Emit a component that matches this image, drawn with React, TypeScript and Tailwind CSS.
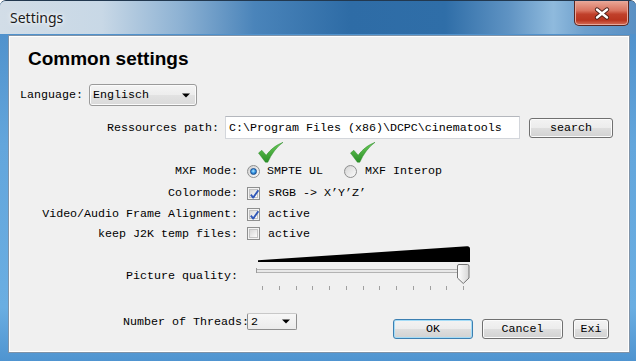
import React from "react";

const mono = "font-['Liberation_Mono','DejaVu_Sans_Mono',monospace] text-[11.67px] leading-[14px] text-black";

function GreenCheck() {
  return (
    <svg width="26" height="21" viewBox="0 0 26 21">
      <defs>
        <linearGradient id="gk" x1="0" y1="0" x2="0" y2="1">
          <stop offset="0" stopColor="#6ccd5a" />
          <stop offset="1" stopColor="#2b8f27" />
        </linearGradient>
      </defs>
      <path
        d="M0.5 11 L3.8 8.3 L8.2 13.2 C12.5 7.5 17.5 3.2 25 0.3 C18.5 5.2 13.5 11.8 9.8 20.2 L7.4 20.2 Z"
        fill="url(#gk)"
        stroke="#2f8a2a"
        strokeWidth="0.5"
      />
    </svg>
  );
}

function CheckBox({ checked }: { checked: boolean }) {
  return (
    <div className="w-[13px] h-[13px] shrink-0 border border-[#8e8f8f] bg-[#f4f4f4] p-[1px]">
      <div className="relative w-full h-full border border-[#c3c3c3] bg-[linear-gradient(135deg,#d8d8d8,#fbfbfb)]">
        {checked && (
          <svg className="absolute left-[-1px] top-[-1px]" width="11" height="11" viewBox="0 0 11 11">
            <path d="M1.8 5.6 L4.2 8.6 L9.4 1.2" fill="none" stroke="#3158b8" strokeWidth="1.9" strokeLinejoin="round" />
          </svg>
        )}
      </div>
    </div>
  );
}

function Radio({ on }: { on: boolean }) {
  return (
    <div className="w-[13px] h-[13px] shrink-0 rounded-full border border-[#8e8f8f] bg-[linear-gradient(135deg,#cfcfcf,#fdfdfd)] flex items-center justify-center">
      {on ? (
        <div className="w-[7px] h-[7px] rounded-full border border-[#1b4c8c] bg-[radial-gradient(circle_at_45%_40%,#b8ecff_0%,#3b9ae6_45%,#0f5aa8_100%)]" />
      ) : (
        <div className="w-[9px] h-[9px] rounded-full bg-[linear-gradient(135deg,#d9d9d9,#f7f7f7)]" />
      )}
    </div>
  );
}

function Arrow() {
  return (
    <svg width="8" height="5" viewBox="0 0 8 5">
      <path d="M0 0.5 L8 0.5 L4 4.5 Z" fill="#000" />
    </svg>
  );
}

function Btn({ label, w, def }: { label: string; w: string; def?: boolean }) {
  return (
    <div
      className={
        (def
          ? "border-[#3c7fb1] shadow-[inset_0_0_0_1px_#a4dcf7] "
          : "border-[#707070] shadow-[inset_0_0_0_1px_#fbfbfb] ") +
        w +
        " h-[20px] shrink-0 rounded-[3px] border bg-[linear-gradient(180deg,#f3f3f3_0%,#ececec_50%,#dedede_52%,#d2d2d2_100%)] flex items-center justify-center " +
        mono
      }
    >
      {label}
    </div>
  );
}

function Slider() {
  const ticks = Array.from({ length: 13 }, (_, i) => 6 + i * 16.75);
  return (
    <svg width="216" height="48" viewBox="0 0 216 48" className="shrink-0">
      <defs>
        <linearGradient id="th" x1="0" y1="0" x2="1" y2="0">
          <stop offset="0" stopColor="#ffffff" />
          <stop offset="1" stopColor="#d6d6d6" />
        </linearGradient>
      </defs>
      <path d="M2 16.3 L211 2.2 Q214 2 214 5 L214 18 L2 18 Z" fill="#000" />
      <rect x="0.5" y="25.5" width="207" height="3" fill="#e8e8e8" stroke="#b3b3b3" strokeWidth="1" />
      <line x1="0.5" y1="24" x2="0.5" y2="29" stroke="#9a9a9a" strokeWidth="1" />
      {ticks.map((x, i) => (
        <line key={i} x1={Math.round(x) + 0.5} y1="42" x2={Math.round(x) + 0.5} y2="46" stroke="#a0a0a0" strokeWidth="1" />
      ))}
      <path
        d="M201.5 22 Q201.5 20.5 203 20.5 L211.5 20.5 Q213 20.5 213 22 L213 34 L207.25 39.5 L201.5 34 Z"
        fill="url(#th)"
        stroke="#737373"
        strokeWidth="1"
      />
    </svg>
  );
}

export default function App() {
  return (
    <div className="w-[636px] h-[361px] overflow-hidden flex flex-col rounded-t-[6px] border-t border-[#22384f] bg-[linear-gradient(180deg,#4b8cc8_0%,#63a6dc_40%,#6aaee2_85%,#4f94d0_100%)]">
      {/* Title bar */}
      <div className="h-[33px] shrink-0 flex justify-between bg-[linear-gradient(90deg,#d2dde7_0%,#c8d8e6_16%,#8fb3d4_28%,#4a84ba_40%,#2e6ca6_55%,#2f6ea8_70%,#5f93c3_80%,#8fbadd_87%,#6d9fcc_92%,#5a90c4_100%)]">
        <span className="pl-[10px] pt-[7px] font-['Noto_Sans','Liberation_Sans',sans-serif] text-[14px] leading-[20px] text-[#1b1b1b] [text-shadow:0_0_6px_#ffffff,0_0_3px_#ffffff]">
          Settings
        </span>
        <div className="mr-[7px] w-[55px] h-[25px] rounded-b-[5px] border border-t-0 border-[#5a2620] shadow-[inset_0_0_0_1px_#e7a89c] bg-[linear-gradient(180deg,#e9a897_0%,#d9735f_40%,#c0402b_55%,#b9351f_80%,#d8705a_100%)] flex items-center justify-center">
          <svg width="16" height="13" viewBox="0 0 16 13">
            <path d="M3 2.5 L13 10.5 M13 2.5 L3 10.5" stroke="#4a2019" strokeWidth="4.2" strokeLinecap="round" />
            <path d="M3 2.5 L13 10.5 M13 2.5 L3 10.5" stroke="#ffffff" strokeWidth="2.4" strokeLinecap="round" />
          </svg>
        </div>
      </div>

      {/* Middle */}
      <div className="flex-1 flex pl-[8px] pr-[6px] pt-[1px] pb-[8px]">
        <div className="relative flex-1 border border-[#7f93a8] bg-[#f0f0f0] shadow-[inset_0_0_0_1px_#ffffff] flex flex-col">
          {/* Heading */}
          <div className="mt-[12px] pl-[19px] font-['Liberation_Sans',Arial,sans-serif] font-bold text-[19px] leading-[22px] text-black">
            Common settings
          </div>

          {/* Language */}
          <div className="mt-[14px] h-[22px] flex items-center pl-[11px]">
            <span className={mono + " w-[63px]"}>Language:</span>
            <div className="ml-[6px] w-[108px] h-[22px] rounded-[3px] border border-[#9a9a9a] shadow-[inset_0_0_0_1px_#fbfbfb] bg-[linear-gradient(180deg,#f4f4f4_0%,#ededed_50%,#e2e2e2_52%,#dadada_100%)] flex items-center justify-between pl-[3px] pr-[6px]">
              <span className={mono}>Englisch</span>
              <Arrow />
            </div>
          </div>

          {/* Ressources path */}
          <div className="mt-[10px] h-[23px] flex items-center pl-[98px]">
            <span className={mono + " w-[112px]"}>Ressources path:</span>
            <div className="ml-[6px] w-[295px] h-[23px] border border-[#d3d6db] border-t-[#b4b7bd] bg-white flex items-center pl-[3px]">
              <span className={mono}>C:\Program Files (x86)\DCPC\cinematools</span>
            </div>
            <div className="ml-[9px]">
              <Btn label="search" w="w-[84px]" />
            </div>
          </div>

          {/* MXF Mode */}
          <div className="mt-[21px] h-[22px] flex items-center">
            <span className={mono + " w-[229px] text-right"}>MXF Mode:</span>
            <div className="ml-[9px] flex items-center">
              <Radio on />
              <span className={mono + " ml-[7px]"}>SMPTE UL</span>
              <div className="ml-[21px]">
                <Radio on={false} />
              </div>
              <span className={mono + " ml-[8px]"}>MXF Interop</span>
            </div>
          </div>

          {/* Colormode */}
          <div className="h-[22px] flex items-center">
            <span className={mono + " w-[229px] text-right"}>Colormode:</span>
            <div className="ml-[9px] flex items-center">
              <CheckBox checked />
              <span className={mono + " ml-[8px]"}>sRGB -&gt; X’Y’Z’</span>
            </div>
          </div>

          {/* Video/Audio */}
          <div className="h-[20px] flex items-center">
            <span className={mono + " w-[229px] text-right"}>Video/Audio Frame Alignment:</span>
            <div className="ml-[9px] flex items-center">
              <CheckBox checked />
              <span className={mono + " ml-[8px]"}>active</span>
            </div>
          </div>

          {/* keep J2K */}
          <div className="h-[19px] flex items-center">
            <span className={mono + " w-[229px] text-right"}>keep J2K temp files:</span>
            <div className="ml-[9px] flex items-center">
              <CheckBox checked={false} />
              <span className={mono + " ml-[8px]"}>active</span>
            </div>
          </div>

          {/* Picture quality */}
          <div className="mt-[1px] h-[48px] flex items-start">
            <span className={mono + " w-[229px] text-right pt-[25px]"}>Picture quality:</span>
            <div className="ml-[18px]">
              <Slider />
            </div>
          </div>

          {/* Threads + buttons */}
          <div className="mt-[21px] flex items-start pl-[114px]">
            <span className={mono + " w-[126px] pt-[2px]"}>Number of Threads:</span>
            <div className="ml-[-2px] w-[50px] h-[17px] border border-[#8e8e8e] border-t-[#c8c8c8] rounded-[2px] bg-[linear-gradient(180deg,#f7f7f7,#ebebeb)] flex items-center justify-between pl-[3px] pr-[6px]">
              <span className={mono}>2</span>
              <Arrow />
            </div>
            <div className="ml-[96px] mt-[6px] flex items-center">
              <Btn label="OK" w="w-[80px]" def />
              <div className="ml-[9px]">
                <Btn label="Cancel" w="w-[81px]" />
              </div>
              <div className="ml-[10px]">
                <Btn label="Exi" w="w-[36px]" />
              </div>
            </div>
          </div>

          {/* annotation check marks */}
          <div className="absolute left-[249px] top-[106px]">
            <GreenCheck />
          </div>
          <div className="absolute left-[341px] top-[106px]">
            <GreenCheck />
          </div>
        </div>
      </div>
    </div>
  );
}
